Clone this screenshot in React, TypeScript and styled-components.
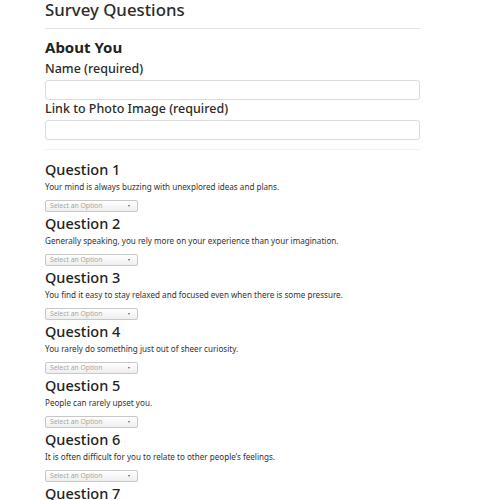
import React from "react";
import styled, { createGlobalStyle } from "styled-components";

const GlobalStyle = createGlobalStyle`
  html, body { margin: 0; padding: 0; background: #ffffff; }
  body {
    font-family: "Noto Sans", "Open Sans", sans-serif;
    color: #2b2b2b;
  }
  ::-webkit-scrollbar { display: none; }
`;

const Page = styled.div`
  width: 375px;
  margin-left: 45px;
  display: flex;
  flex-direction: column;
`;

const Title = styled.h1`
  margin: 0;
  font-size: 16.8px;
  line-height: 20px;
  font-weight: 500;
  color: #2b2b2b;
`;

const Rule = styled.hr<{ $light?: boolean; $gap: number }>`
  margin: ${(p) => p.$gap}px 0 0;
  border: 0;
  height: 1px;
  background: ${(p) => (p.$light ? "#f2f2f2" : "#e4e4e4")};
`;

const SectionTitle = styled.h2`
  margin: 7.5px 0 3px;
  font-size: 15px;
  line-height: 20px;
  font-weight: 700;
  color: #222;
`;

const Field = styled.div`
  display: flex;
  flex-direction: column;
`;

const Label = styled.label`
  font-size: 12.5px;
  line-height: 18px;
  font-weight: 500;
  color: #2b2b2b;
  margin-bottom: 2px;
`;

const TextInput = styled.input`
  box-sizing: border-box;
  width: 100%;
  height: 20px;
  margin: 0;
  border: 1px solid #dcdcdc;
  border-radius: 3px;
  background: #fff;
  font: inherit;
  font-size: 10px;
  padding: 0 6px;
`;

const Questions = styled.div`
  margin-top: 10px;
  display: flex;
  flex-direction: column;
`;

const Question = styled.div`
  display: flex;
  flex-direction: column;
  height: 54px;
`;

const QuestionTitle = styled.h3`
  margin: 0;
  font-size: 14.5px;
  line-height: 18px;
  font-weight: 500;
  color: #222;
`;

const QuestionText = styled.p`
  margin: 3.5px 0 7px;
  font-size: 8.1px;
  line-height: 12px;
  color: #333;
`;

const SelectBox = styled.div`
  box-sizing: border-box;
  width: 93px;
  height: 12px;
  border: 1px solid #c8c8c8;
  border-radius: 2px;
  background: linear-gradient(#ffffff, #eeeeee);
  display: flex;
  align-items: center;
  justify-content: space-between;
  padding: 0 7px 0 4px;
`;

const Placeholder = styled.span`
  font-size: 6.8px;
  line-height: 8px;
  color: #a6a6a6;
`;

const Caret = styled.span`
  width: 0;
  height: 0;
  border-left: 1.6px solid transparent;
  border-right: 1.6px solid transparent;
  border-top: 2.6px solid #666;
`;

const questions = [
  "Your mind is always buzzing with unexplored ideas and plans.",
  "Generally speaking, you rely more on your experience than your imagination.",
  "You find it easy to stay relaxed and focused even when there is some pressure.",
  "You rarely do something just out of sheer curiosity.",
  "People can rarely upset you.",
  "It is often difficult for you to relate to other people\u2019s feelings.",
  "You often make a backup plan for a backup plan.",
];

export default function App() {
  return (
    <>
      <GlobalStyle />
      <Page>
        <Title>Survey Questions</Title>
        <Rule $gap={8} />
        <SectionTitle>About You</SectionTitle>
        <Field>
          <Label htmlFor="name">Name (required)</Label>
          <TextInput id="name" type="text" />
        </Field>
        <Field>
          <Label htmlFor="photo">Link to Photo Image (required)</Label>
          <TextInput id="photo" type="text" />
        </Field>
        <Rule $light $gap={9} />
        <Questions>
          {questions.map((q, i) => (
            <Question key={i}>
              <QuestionTitle>Question {i + 1}</QuestionTitle>
              <QuestionText>{q}</QuestionText>
              <SelectBox>
                <Placeholder>Select an Option</Placeholder>
                <Caret />
              </SelectBox>
            </Question>
          ))}
        </Questions>
      </Page>
    </>
  );
}
